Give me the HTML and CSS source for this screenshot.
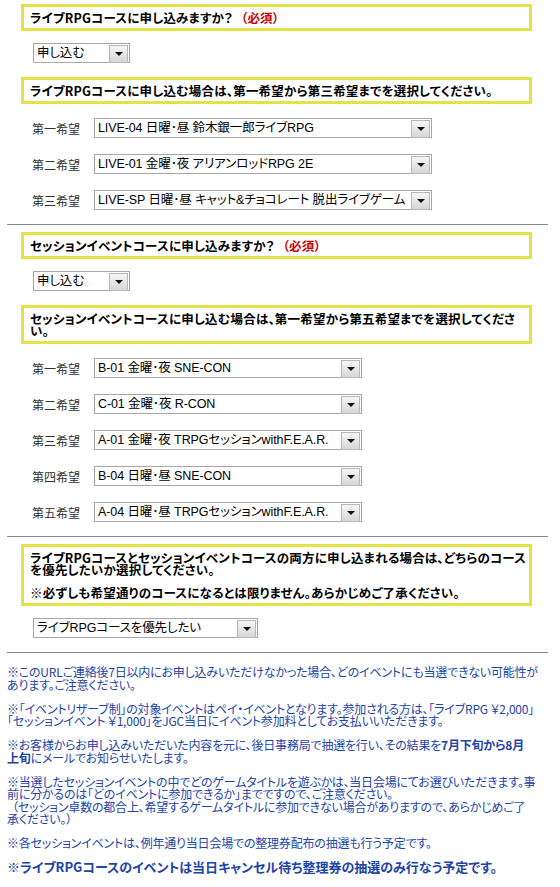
FILE: index.html
```html
<!DOCTYPE html>
<html lang="ja">

<head>
  <meta charset="UTF-8">
  <meta name="viewport" content="width=device-width">
  <title>コース申し込み</title>
  <link rel="stylesheet" href="styles.css">
</head>

<body>
  <form class="page">
    <section class="section">
      <p class="notice">ライブRPGコースに申し込みますか？ <span class="required">（必須）</span></p>
      <div class="field">
        <span class="dropdown dropdown--apply"><select><option>申し込む</option></select></span>
      </div>
      <p class="notice">ライブRPGコースに申し込む場合は、第一希望から第三希望までを選択してください。</p>
      <div class="choices">
        <div class="choice">
          <label>第一希望</label>
          <span class="dropdown dropdown--live"><select><option>LIVE-04 日曜･昼 鈴木銀一郎ライブRPG</option></select></span>
        </div>
        <div class="choice">
          <label>第二希望</label>
          <span class="dropdown dropdown--live"><select><option>LIVE-01 金曜･夜 アリアンロッドRPG 2E</option></select></span>
        </div>
        <div class="choice">
          <label>第三希望</label>
          <span class="dropdown dropdown--live"><select><option>LIVE-SP 日曜･昼 キャット&amp;チョコレート 脱出ライブゲーム</option></select></span>
        </div>
      </div>
    </section>

    <hr class="rule">

    <section class="section">
      <p class="notice">セッションイベントコースに申し込みますか？ <span class="required">（必須）</span></p>
      <div class="field">
        <span class="dropdown dropdown--apply"><select><option>申し込む</option></select></span>
      </div>
      <p class="notice">セッションイベントコースに申し込む場合は、第一希望から第五希望までを選択してくださ<br>い。</p>
      <div class="choices">
        <div class="choice">
          <label>第一希望</label>
          <span class="dropdown dropdown--session"><select><option>B-01 金曜･夜 SNE-CON</option></select></span>
        </div>
        <div class="choice">
          <label>第二希望</label>
          <span class="dropdown dropdown--session"><select><option>C-01 金曜･夜 R-CON</option></select></span>
        </div>
        <div class="choice">
          <label>第三希望</label>
          <span class="dropdown dropdown--session"><select><option>A-01 金曜･夜 TRPGセッションwithF.E.A.R.</option></select></span>
        </div>
        <div class="choice">
          <label>第四希望</label>
          <span class="dropdown dropdown--session"><select><option>B-04 日曜･昼 SNE-CON</option></select></span>
        </div>
        <div class="choice">
          <label>第五希望</label>
          <span class="dropdown dropdown--session"><select><option>A-04 日曜･昼 TRPGセッションwithF.E.A.R.</option></select></span>
        </div>
      </div>
    </section>

    <hr class="rule">

    <section class="section">
      <div class="notice">
        <p>ライブRPGコースとセッションイベントコースの両方に申し込まれる場合は、どちらのコース<br>を優先したいか選択してください。</p>
        <p>※必ずしも希望通りのコースになるとは限りません。あらかじめご了承ください。</p>
      </div>
      <div class="field">
        <span class="dropdown dropdown--priority"><select><option>ライブRPGコースを優先したい</option></select></span>
      </div>
    </section>

    <hr class="rule">

    <div class="notes">
      <p>※このURLご連絡後7日以内にお申し込みいただけなかった場合、どのイベントにも当選できない可能性が<br>あります。ご注意ください。</p>
      <p>※「イベントリザーブ制」の対象イベントはペイ・イベントとなります。参加される方は、「ライブRPG ￥2,000」<br>「セッションイベント ￥1,000」をJGC当日にイベント参加料としてお支払いいただきます。</p>
      <p>※お客様からお申し込みいただいた内容を元に、後日事務局で抽選を行い、その結果を<strong>7月下旬から8月<br>上旬</strong>にメールでお知らせいたします。</p>
      <p>※当選したセッションイベントの中でどのゲームタイトルを遊ぶかは、当日会場にてお選びいただきます。事<br>前に分かるのは「どのイベントに参加できるか」までですので、ご注意ください。<br><span class="indent">（セッション卓数の都合上、希望するゲームタイトルに参加できない場合がありますので、あらかじめご了</span><br>承ください。）</p>
      <p>※各セッションイベントは、例年通り当日会場での整理券配布の抽選も行う予定です。</p>
      <p class="notes-last">※ライブRPGコースのイベントは当日キャンセル待ち整理券の抽選のみ行なう予定です。</p>
    </div>
  </form>
</body>

</html>
```

FILE: styles.css
```css
* {
  box-sizing: border-box;
}

html,
body {
  margin: 0;
  padding: 0;
  background-color: #fff;
  --notice-border: #e2e244;
  --note-blue: #1d44a8;
  --select-border: #a7a7a7;
  font-family: "Noto Sans CJK JP", sans-serif;
  font-feature-settings: "palt";
  font-size: 12px;
  color: #000;
}

.page {
  width: 548px;
  padding: 4px 0 0 7px;
}

.section {
  display: flex;
  flex-direction: column;
  align-items: flex-start;
  gap: 14px;
  padding-bottom: 14px;
}

.rule + .section {
  padding-top: 7px;
}

.rule {
  margin: 0;
  height: 0;
  border: 0;
  border-top: 1px solid #8a8a8a;
}

/* yellow framed question boxes */
.notice {
  margin: 0 0 0 14px;
  width: 511px;
  border: 3px solid var(--notice-border);
  padding: 5px 6px 4px;
  font-size: 12.5px;
  letter-spacing: 0.2px;
  font-weight: bold;
  line-height: 12px;
  white-space: nowrap;
}

.notice p {
  margin: 0;
}

.notice p + p {
  margin-top: 11px;
}

.required {
  margin-left: 5px;
  color: #cc0000;
}

.field {
  margin: -2px 0 0 26px;
}

.choices {
  display: flex;
  flex-direction: column;
  gap: 16px;
  margin-left: 25px;
}

.choice {
  display: flex;
  align-items: center;
}

.choice label {
  width: 62px;
  color: #333;
}

/* windows style drop down */
.dropdown {
  position: relative;
  display: block;
}

.dropdown select {
  display: block;
  appearance: none;
  -webkit-appearance: none;
  height: 20px;
  width: 100%;
  margin: 0;
  padding: 0 19px 0 3px;
  border: 1px solid var(--select-border);
  border-radius: 0;
  background-color: #fff;
  font-family: "Liberation Sans", "Noto Sans CJK JP", sans-serif;
  font-feature-settings: "palt";
  font-size: 12.5px;
  letter-spacing: -0.1px;
  color: #000;
  white-space: nowrap;
  overflow: hidden;
}

.dropdown::after {
  content: "";
  position: absolute;
  top: 2px;
  right: 2px;
  width: 17px;
  height: 16px;
  border: 1px solid #b8b8b8;
  background: linear-gradient(#f6f6f6, #d6d6d6);
  pointer-events: none;
}

.dropdown::before {
  content: "";
  position: absolute;
  z-index: 1;
  top: 9px;
  right: 7px;
  border-left: 4px solid transparent;
  border-right: 4px solid transparent;
  border-top: 4px solid #111;
  pointer-events: none;
}

.dropdown--apply {
  width: 97px;
}

.dropdown--live {
  width: 338px;
}

.dropdown--session {
  width: 268px;
}

.dropdown--priority {
  width: 225px;
}

/* blue notes at the bottom */
.notes {
  padding-top: 13px;
  color: var(--note-blue);
  line-height: 12.5px;
  letter-spacing: -0.2px;
  white-space: nowrap;
}

.notes p {
  margin: 0 0 11.5px;
}

.notes strong {
  font-weight: bold;
}

.notes .indent {
  padding-left: 5px;
}

.notes-last {
  font-weight: bold;
  font-size: 13px;
  letter-spacing: 0;
}
```
